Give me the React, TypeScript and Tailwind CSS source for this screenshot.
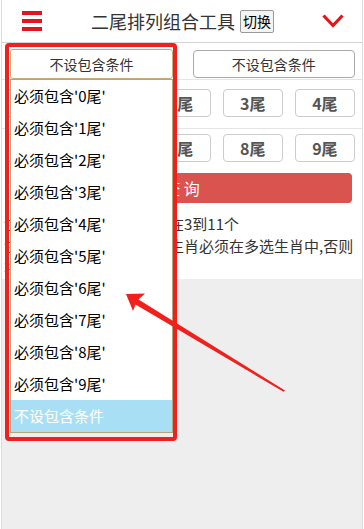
import React from "react";

const FONT = "font-['Microsoft_YaHei','Noto_Sans_CJK_SC','Noto_Sans',sans-serif]";

const TAILS_A = ["0尾", "1尾", "2尾", "3尾", "4尾"];
const TAILS_B = ["5尾", "6尾", "7尾", "8尾", "9尾"];

function TailRow({ items, className }: { items: string[]; className: string }) {
  return (
    <div className={`grid grid-cols-5 gap-3 pl-1 pr-[7px] ${className}`}>
      {items.map((t) => (
        <button
          key={t}
          className="h-[28px] rounded-[4px] border border-[#ccc] bg-white text-[16px] font-bold leading-none text-[#555]"
        >
          {t}
        </button>
      ))}
    </div>
  );
}

function Dropdown() {
  const opts = Array.from({ length: 10 }, (_, i) => `必须包含'${i}尾'`);
  return (
    <div className="absolute left-[10px] top-[49px] w-[163px]">
      <div className="flex h-[30px] items-center justify-center rounded-[3px] border border-[#cbab72] bg-white text-[14px] text-[#333]">
        不设包含条件
      </div>
      <div className="border border-[#b9a17c] bg-white">
        {opts.map((o) => (
          <div key={o} className="h-[32px] pl-[3px] text-[15px] leading-[32px] text-black">
            {o}
          </div>
        ))}
        <div className="h-[32px] bg-[#a9dff4] pl-[3px] text-[15px] leading-[32px] text-white">
          不设包含条件
        </div>
      </div>
    </div>
  );
}

export default function App() {
  return (
    <div className={`relative h-[529px] w-[364px] overflow-hidden bg-white ${FONT}`}>
      <div className="mx-[1px] flex h-full flex-col border-x border-[#ddd]">
        {/* header */}
        <div className="flex h-[43px] items-center border-b border-[#d4d4d4] pl-5">
          <div className="flex flex-col gap-[4px]">
            <span className="block h-[4px] w-[20px] bg-[#e8141b]" />
            <span className="block h-[4px] w-[20px] bg-[#e8141b]" />
            <span className="block h-[4px] w-[20px] bg-[#e8141b]" />
          </div>
          <span className="ml-[49px] text-[18px] leading-none text-[#333]">二尾排列组合工具</span>
          <button className="ml-[5px] h-[23px] rounded-[2px] border border-[#999] bg-[#f4f4f4] px-[2px] text-[14px] leading-none text-black">
            切换
          </button>
          <svg className="ml-auto mr-[18px]" width="22" height="14" viewBox="0 0 22 14">
            <path d="M1.5 1.5 L11 11.5 L20.5 1.5" fill="none" stroke="#e8141b" strokeWidth="3.2" />
          </svg>
        </div>

        {/* selects */}
        <div className="grid grid-cols-2 gap-5 border-b border-[#e5e5e5] pl-2 pr-[7px] pb-px pt-[7px]">
          <div className="flex h-[28px] items-center justify-center rounded-[4px] border border-[#aaa] text-[14px] text-[#333]">
            不设包含条件
          </div>
          <div className="flex h-[28px] items-center justify-center rounded-[4px] border border-[#aaa] text-[14px] text-[#333]">
            不设包含条件
          </div>
        </div>

        <TailRow items={TAILS_A} className="border-b border-[#e5e5e5] pb-[11px] pt-[9px]" />
        <TailRow items={TAILS_B} className="pt-[5px]" />

        <button className="mx-[10px] mt-[11px] h-[30px] rounded-[4px] bg-[#d9534f] text-[16px] text-white">
          查 询
        </button>

        <div className="mt-[10px] whitespace-nowrap pl-[2px] pr-1 text-[15px] leading-[22px] text-[#333]">
          <div>
            <span className="text-[#e8141b]">注：</span>多选生肖的个数必须在3到11个
          </div>
          <div>
            <span className="text-[#e8141b]">注：</span>胆码中所选择的每个生肖必须在多选生肖中,否则
          </div>
          <div className="text-[#666]">将无法查询出结果</div>
        </div>

        <div className="flex-1 bg-[#eee]" />
      </div>

      <Dropdown />

      {/* annotation */}
      <div className="absolute left-[5px] top-[43px] h-[398px] w-[172px] rounded-[4px] border-[4px] border-[#f0201c]" />
      <svg className="absolute left-0 top-0" width="364" height="529" viewBox="0 0 364 529">
        <polygon
          points="126,294 145,293.5 138.5,299.4 285,390.5 283.5,391.8 135.5,304.6 133,311"
          fill="#f0201c"
        />
      </svg>
    </div>
  );
}
